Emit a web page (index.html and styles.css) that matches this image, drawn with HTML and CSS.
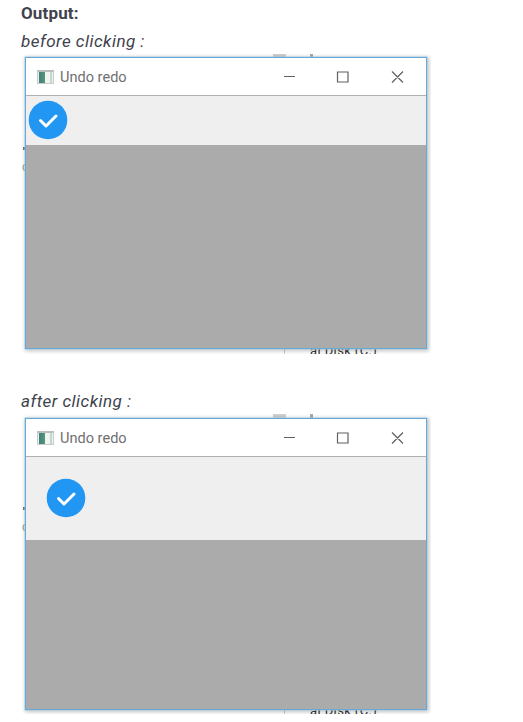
FILE: index.html
```html
<!DOCTYPE html>
<html lang="en">
<head>
<meta charset="utf-8">
<title>Undo redo</title>
<link rel="stylesheet" href="styles.css">
</head>
<body>
<main class="article">
  <h1 class="heading">Output:</h1>
  <p class="caption">before clicking :</p>
  <section class="shot">
    <i class="scrap tab"></i><i class="scrap tick"></i><i class="scrap dot"></i>
    <span class="scrap letter">o</span>
    <i class="scrap divider"></i><span class="scrap disk">al Disk (C:)</span>
    <div class="window">
      <header class="titlebar">
        <i class="app-icon"></i><span class="title">Undo redo</span>
        <svg class="controls" width="124" height="16" viewBox="0 0 124 16"><path d="M1 7.500h11M54.500 3h10.500v10h-10.500zM109 2.500l11 11M120 2.500l-11 11"/></svg>
      </header>
      <div class="toolbar">
        <svg class="check" width="40" height="40" viewBox="0 0 40 40"><circle cx="20" cy="20" r="19.300"/><path d="M12.500 20.500l5.500 5.500 10-10"/></svg>
      </div>
      <div class="canvas"></div>
    </div>
  </section>
  <p class="caption second">after clicking :</p>
  <section class="shot lower">
    <i class="scrap tab"></i><i class="scrap tick"></i><i class="scrap dot"></i>
    <span class="scrap letter">o</span>
    <i class="scrap divider"></i><span class="scrap disk">al Disk (C:)</span>
    <div class="window">
      <header class="titlebar">
        <i class="app-icon"></i><span class="title">Undo redo</span>
        <svg class="controls" width="124" height="16" viewBox="0 0 124 16"><path d="M1 7.500h11M54.500 3h10.500v10h-10.500zM109 2.500l11 11M120 2.500l-11 11"/></svg>
      </header>
      <div class="toolbar roomy">
        <svg class="check" width="40" height="40" viewBox="0 0 40 40"><circle cx="20" cy="20" r="19.300"/><path d="M12.500 20.500l5.500 5.500 10-10"/></svg>
      </div>
      <div class="canvas"></div>
    </div>
  </section>
</main>
</body>
</html>
```
FILE: styles.css
```css
* { box-sizing: border-box; }
body { margin: 0; background: #fff; overflow: hidden; }
.article { padding-left: 21px; color: #40424e; font-family: Roboto, "Liberation Sans", sans-serif; }
.heading { margin: 0; height: 28px; font-size: 17px; line-height: 26px; font-weight: 700; letter-spacing: .15px; }
.caption { margin: 0; height: 26px; font-size: 17px; line-height: 26px; font-style: italic; letter-spacing: .48px; }
.second { height: 60px; padding-top: 34px; }
.shot { position: relative; height: 300px; width: 410px; padding: 3px 5px 5px 4px; overflow: hidden; }
.window {
  position: relative; height: 292px; width: 402px; display: flex; flex-direction: column;
  border: 1px solid #68a9d6; box-shadow: 0 0 0 .5px #a7cee8, 1px 1px 4px 1px rgba(0,0,0,.24); background: #fff;
}
.titlebar { height: 38px; padding: 0 19px 0 11px; display: flex; align-items: center; border-bottom: 1px solid #b0b0b0; flex: none; }
.app-icon {
  width: 17px; height: 14px; border: 1px solid #c8cdcc; border-top: 2px solid #b9bfc0;
  background: linear-gradient(90deg, #e4eeea 1px, #427f80 1px, #539873 7px, #f0f5f2 7px, #f0f5f2 12px, #9fb5ae 13px, #edf4f0 14px);
}
.title { margin-left: 6px; font-size: 14px; color: #707070; transform: scaleX(1.04); transform-origin: left; white-space: nowrap; }
.controls { margin-left: auto; fill: none; stroke: #606060; stroke-width: 1.2; }
.toolbar { height: 49px; padding: 4px 2px; background: #efefef; flex: none; }
.toolbar.roomy { height: 83px; padding: 21px 20px; }
.lower { padding-top: 4px; }
.check { display: block; fill: #2196f3; }
.check path { fill: none; stroke: #fff; stroke-width: 3; stroke-linecap: round; stroke-linejoin: round; }
.canvas { flex: 1; background: #ababab; }
.scrap { position: absolute; }
.tab { left: 252px; top: 0; width: 13px; height: 4px; background: #d0d0d0; }
.tick { left: 289px; top: 0; width: 3px; height: 4px; background: #aaa; }
.dot { left: 2px; top: 93px; width: 2px; height: 3px; background: #777; }
.letter { left: 1px; top: 107px; font-size: 12px; line-height: 13px; color: #999; }
.divider { left: 263px; bottom: 0; width: 1px; height: 6px; background: #ccc; }
.disk { left: 289px; top: 289px; font-size: 13px; line-height: 16px; letter-spacing: .4px; color: #333; white-space: nowrap; }
```
